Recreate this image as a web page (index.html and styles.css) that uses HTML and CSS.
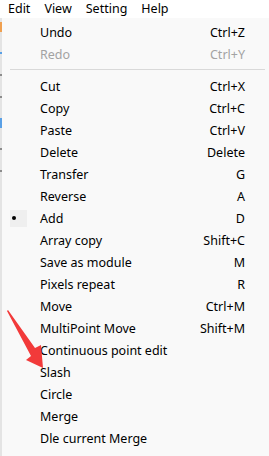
FILE: index.html
```html
<!DOCTYPE html>
<html lang="en">
  <head>
    <meta charset="UTF-8" />
    <title>Edit menu</title>
    <link rel="stylesheet" href="styles.css">
  </head>
  <body>
    <div class="menubar">
      <span class="menubar-item">Edit</span>
      <span class="menubar-item">View</span>
      <span class="menubar-item">Setting</span>
      <span class="menubar-item">Help</span>
    </div>

    <div class="workspace">
      <!-- edge of the window behind the menu -->
      <div class="back-edge">
        <i class="tick orange"></i>
        <i class="tick blue"></i>
        <i class="tick gray"></i>
        <i class="tick gray"></i>
        <i class="tick blue tall"></i>
        <i class="tick gray"></i>
        <i class="tick gray"></i>
      </div>

      <ul class="menu">
        <li class="menu-item"><span class="check"></span><span>Undo</span><span class="key">Ctrl+Z</span></li>
        <li class="menu-item disabled"><span class="check"></span><span>Redo</span><span class="key">Ctrl+Y</span></li>
        <li class="separator"></li>
        <li class="menu-item"><span class="check"></span><span>Cut</span><span class="key">Ctrl+X</span></li>
        <li class="menu-item"><span class="check"></span><span>Copy</span><span class="key">Ctrl+C</span></li>
        <li class="menu-item"><span class="check"></span><span>Paste</span><span class="key">Ctrl+V</span></li>
        <li class="menu-item"><span class="check"></span><span>Delete</span><span class="key">Delete</span></li>
        <li class="menu-item"><span class="check"></span><span>Transfer</span><span class="key">G</span></li>
        <li class="menu-item"><span class="check"></span><span>Reverse</span><span class="key">A</span></li>
        <li class="menu-item"><span class="check checked"><b></b></span><span>Add</span><span class="key">D</span></li>
        <li class="menu-item"><span class="check"></span><span>Array copy</span><span class="key">Shift+C</span></li>
        <li class="menu-item"><span class="check"></span><span>Save as module</span><span class="key">M</span></li>
        <li class="menu-item"><span class="check"></span><span>Pixels repeat</span><span class="key">R</span></li>
        <li class="menu-item"><span class="check"></span><span>Move</span><span class="key">Ctrl+M</span></li>
        <li class="menu-item"><span class="check"></span><span>MultiPoint Move</span><span class="key">Shift+M</span></li>
        <li class="menu-item"><span class="check"></span><span>Continuous point edit</span><span class="key"></span></li>
        <li class="menu-item"><span class="check"></span><span>Slash</span><span class="key"></span></li>
        <li class="menu-item"><span class="check"></span><span>Circle</span><span class="key"></span></li>
        <li class="menu-item"><span class="check"></span><span>Merge</span><span class="key"></span></li>
        <li class="menu-item"><span class="check"></span><span>Dle current Merge</span><span class="key"></span></li>
        <li class="menu-item"><span class="check"></span><span>New Scene</span><span class="key"></span></li>
      </ul>

      <!-- red annotation arrow drawn over the menu -->
      <svg class="annotation" width="50" height="70" viewBox="0 0 50 70">
        <polygon points="8,0 35,38 41,35 43,58 26,50 31,46 7,1" fill="#f23a3a" />
      </svg>
    </div>
  </body>
</html>
```

FILE: styles.css
```css
:root {
  --menu-bg: #f9f9f9;
  --bar-bg: #ffffff;
  --text: #000000;
  --muted: #a3a3a3;
  --line: #d9d9d9;
  --row: 22px;
}

html,
body {
  margin: 0;
  padding: 0;
  height: 100%;
  overflow: hidden;
}

body {
  font-family: "Noto Sans", "Noto Sans CJK SC", sans-serif;
  font-size: 12px;
  color: var(--text);
  background-color: var(--menu-bg);
}

.menubar {
  display: flex;
  height: 18px;
  align-items: center;
  padding-left: 8px;
  gap: 14px;
  background-color: var(--bar-bg);
}

.menubar-item {
  font-size: 12.5px;
  line-height: 18px;
}

.workspace {
  position: relative;
  display: flex;
}

.back-edge {
  width: 2px;
  height: 440px;
  background-color: #e4e4e4;
  display: flex;
  flex-direction: column;
  gap: 20px;
  padding-top: 4px;
}

.tick {
  display: block;
  width: 2px;
  height: 6px;
}

.tick.orange {
  background-color: #f0a050;
  height: 10px;
}

.tick.blue {
  background-color: #5aa0e6;
  height: 2px;
}

.tick.tall {
  height: 10px;
}

.tick.gray {
  background-color: #8c8c8c;
  height: 2px;
}

.menu {
  flex: 1;
  list-style: none;
  margin: 0;
  padding: 3px 0 0;
}

.menu-item {
  display: grid;
  grid-template-columns: 38px 1fr auto;
  align-items: center;
  height: var(--row);
  padding-right: 24px;
  font-size: 12.5px;
  white-space: nowrap;
}

.menu-item.disabled {
  color: var(--muted);
}

.check {
  display: flex;
  align-items: center;
  justify-content: flex-start;
  height: 17px;
  width: 17px;
  margin-left: 8px;
}

.check.checked {
  background-color: #efefef;
}

.check b {
  width: 4px;
  height: 4px;
  border-radius: 50%;
  background-color: #000;
  margin-left: 2px;
}

.key {
  text-align: right;
}

.separator {
  height: 1px;
  margin: 4px 4px 5px 8px;
  background-color: var(--line);
}

.annotation {
  position: absolute;
  left: 0;
  top: 292px;
}
```
